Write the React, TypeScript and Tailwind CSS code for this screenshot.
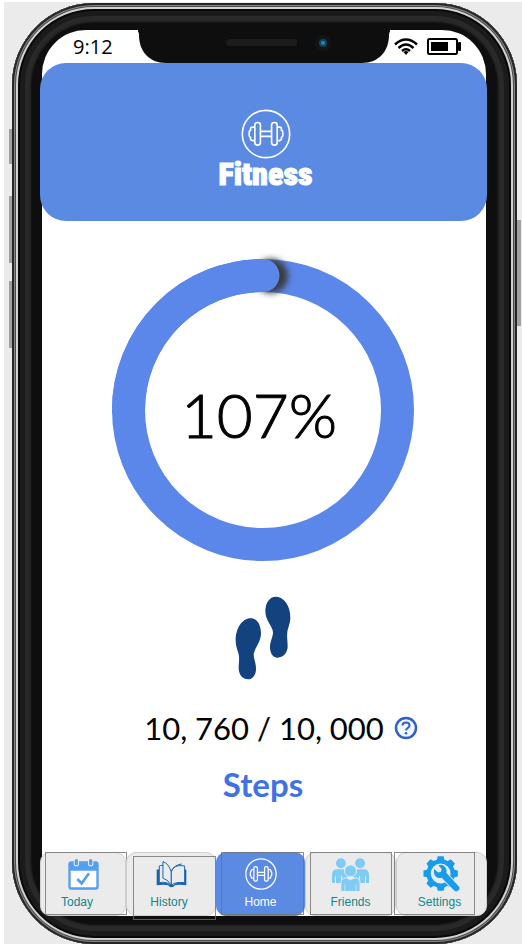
import type { ReactNode } from 'react';

function DumbbellIcon({ className, stroke }: { className: string; stroke: number }) {
  return (
    <svg viewBox="0 0 152 152" fill="none" stroke="#fff" strokeWidth={stroke} strokeLinejoin="round" className={className} aria-hidden="true">
      <circle cx="76" cy="76" r="72" />
      <rect x="42" y="41" width="17" height="69" rx="8" />
      <rect x="93" y="41" width="17" height="69" rx="8" />
      <path d="M42 55h-7q-6 0-6 6v4q-4 1-4 5v11q0 4 4 5v4q0 6 6 6h7" />
      <path d="M110 55h7q6 0 6 6v4q4 1 4 5v11q0 4-4 5v4q0 6-6 6h-7" />
      <path d="M59 68h34M59 83h34" />
    </svg>
  );
}

function TodayIcon() {
  return (
    <svg viewBox="0 0 93 93" className="h-[31px] w-[31px]" aria-hidden="true">
      <rect x="1" y="7" width="91" height="85" rx="9" fill="#529ff3" />
      <rect x="8" y="35" width="77" height="50" rx="2" fill="#fff" />
      <path d="M17 0v14a8 8 0 0 0 16 0V0zM60 0v14a8 8 0 0 0 16 0V0z" fill="#ebebeb" />
      <rect x="20" y="0" width="10" height="19" rx="5" fill="#529ff3" />
      <rect x="63" y="0" width="10" height="19" rx="5" fill="#529ff3" />
      <path d="M28 60l13 13 22-30" fill="none" stroke="#529ff3" strokeWidth="8" />
    </svg>
  );
}

function BookIcon() {
  return (
    <svg viewBox="0 0 92 82" className="h-[27px] w-[31px]" aria-hidden="true">
      <path d="M1 26h8v41q22-4 32 6h10q10-10 32-6V26h8v48q-24-3-35 0-3 6-10 6t-10-6q-11-3-35 0z" fill="#1763ae" />
      <g fill="#ebebeb" stroke="#1763ae" strokeWidth="3" strokeLinejoin="round">
        <path d="M9 15q8-3 14-1l22 18v42Q31 61 9 66z" />
        <path d="M45 32Q53 9 86 15v51Q57 62 45 74z" />
        <path d="M20 2q17 5 25 30v42Q37 57 20 52z" />
        <path d="M45 32Q54 12 77 9" fill="none" />
      </g>
    </svg>
  );
}

function FriendsIcon() {
  return (
    <svg viewBox="0 0 112 100" className="h-[33px] w-[37px]" fill="#7ecbf6" aria-hidden="true">
      <circle cx="27" cy="16" r="15" />
      <circle cx="85" cy="16" r="15" />
      <path d="M0 76V50q0-16 16-16h20q4 14 15 22-14 4-16 20h-5V54h-3v22H12V56H9v20z" />
      <path d="M112 76V50q0-16-16-16H76q-4 14-15 22 14 4 16 20h5V54h3v22h15V56h3v20z" />
      <g stroke="#ebebeb" strokeWidth="3">
        <circle cx="56" cy="39" r="18" />
        <path d="M27 103V77q0-17 16-17l13 6 13-6q16 0 16 17v26z" />
      </g>
      <path d="M39 80v22M73 80v22" stroke="#ebebeb" strokeWidth="2" />
    </svg>
  );
}

const TEETH = [0, 45, 90, 135, 180, 225, 270, 315];

function SettingsIcon() {
  return (
    <svg viewBox="0 0 111 112" className="h-[37px] w-[37px]" fill="#159cec" aria-hidden="true">
      {TEETH.map((a) => (
        <path key={a} d="M41 14L44 1h18l3 13z" transform={`rotate(${a} 53 53)`} />
      ))}
      <circle cx="53" cy="53" r="43" />
      <circle cx="53" cy="53" r="30" fill="#ebebeb" />
      <path
        d="M34 39l11 11 9-2 2-9-10-11q13-4 21 6 6 8 3 17l38 41q5 6-1 12t-12 1L56 66q-10 3-18-4-9-9-4-23z"
        stroke="#ebebeb"
        strokeWidth="5"
        paintOrder="stroke"
      />
    </svg>
  );
}

function Footprints() {
  return (
    <svg viewBox="45 30 168 252" className="h-[84px] w-[56px]" fill="#13437f" aria-hidden="true">
      <path d="M92 97c20 0 31 20 31 45 0 26-19 44-22 63 0 14 7 26 7 43 0 20-11 32-24 32-16 0-28-14-28-34 0-15 3-27 0-41-3-13-9-23-9-42 0-36 20-66 45-66z" />
      <path d="M168 32c25 0 43 29 43 62 0 20-7 30-9 44-2 16 1 28 1 43 0 20-14 34-30 34-14 0-23-13-23-32 0-17 8-28 9-43 0-18-23-36-23-64 0-25 12-44 32-44z" />
    </svg>
  );
}

function ProgressRing({ label }: { label: string }) {
  return (
    <div className="relative grid h-[302px] w-[302px] place-items-center">
      <svg viewBox="0 0 302 302" className="absolute inset-0 overflow-visible" fill="none" aria-hidden="true">
        <defs>
          <filter id="cap-shadow" x="-50%" y="-50%" width="200%" height="200%">
            <feGaussianBlur stdDeviation="3" />
          </filter>
        </defs>
        <circle cx="151" cy="151" r="134.5" stroke="#5a87e9" strokeWidth="33" />
        <circle cx="159" cy="17" r="17" fill="#3a3a3a" filter="url(#cap-shadow)" />
        <path d="M16.5 151A134.500 134.500 0 0 1 151 16.500" stroke="#5a87e9" strokeWidth="33" strokeLinecap="round" />
      </svg>
      <p className="relative pr-2 pt-2 font-[Lato,sans-serif] text-[62px] font-light leading-none text-black [-webkit-text-stroke:1px_#000]">
        {label}
      </p>
    </div>
  );
}

function StatusBar() {
  return (
    <div className="relative flex h-[33px] items-center justify-between pl-[31px] pr-[25px]">
      <svg viewBox="0 0 252 33" className="absolute left-1/2 top-0 h-[33px] w-[252px] -translate-x-1/2" aria-hidden="true">
        <path d="M-4 0Q1 0 1 5C1 21 11 33 28 33H224C241 33 251 21 251 5Q251 0 256 0V-1H-4z" fill="#0e0e0e" />
        <rect x="88" y="9" width="71" height="7" rx="3.500" fill="#1c1c1c" />
        <circle cx="185" cy="13" r="8" fill="#141416" />
        <circle cx="185" cy="13" r="4" fill="#12455c" />
        <circle cx="185" cy="13" r="2" fill="#2a86a0" />
      </svg>
      <time className="font-['Open_Sans',sans-serif] text-[20px] leading-none text-black">9:12</time>
      <div className="flex items-center gap-[9px]">
        <svg viewBox="0 0 24 17" className="h-[17px] w-6" fill="none" stroke="#000" strokeWidth="2.500" aria-label="Wi-Fi">
          <path d="M1 6.500Q12-3.500 23 6.500M4.500 10Q12 3 19.500 10M8 13Q12 9.500 16 13" />
          <path d="M9.500 14L12 17l2.500-3Q12 12 9.500 14z" fill="#000" stroke="none" />
        </svg>
        <svg viewBox="0 0 34 18" className="h-[18px] w-[34px]" aria-label="Battery">
          <rect x="1" y="1" width="29" height="15" rx="1.500" fill="#fff" stroke="#000" strokeWidth="2" />
          <rect x="4" y="4" width="17" height="9" fill="#000" />
          <rect x="31" y="4" width="3" height="9" rx="1" fill="#000" />
        </svg>
      </div>
    </div>
  );
}

type Tab = { label: string; icon: ReactNode; active?: boolean; box: string; labelPad?: string };

const TABS: Tab[] = [
  { label: 'Today', icon: <TodayIcon />, box: 'left-1 -right-[2px] -top-px bottom-0', labelPad: 'pr-3' },
  { label: 'History', icon: <BookIcon />, box: 'left-[6px] -right-px top-[3px] -bottom-[5px]', labelPad: 'pr-1' },
  { label: 'Home', icon: <DumbbellIcon className="h-8 w-8" stroke={6} />, active: true, box: 'left-1 right-0 -top-px bottom-0' },
  { label: 'Friends', icon: <FriendsIcon />, box: 'left-1 right-[3px] -top-px bottom-0' },
  { label: 'Settings', icon: <SettingsIcon />, box: '-left-[3px] right-[11px] -top-px bottom-0', labelPad: 'pr-1' },
];

function TabBar() {
  return (
    <nav className="-ml-[2px] -mr-px grid h-[64px] grid-cols-[86fr_90fr_89fr_91fr_91fr]">
      {TABS.map((t) => (
        <button
          key={t.label}
          type="button"
          className={`relative flex flex-col items-center rounded-[10px] border ${
            t.active ? 'border-[#5b8ae3] bg-[#5b8ae3] text-white' : 'border-[#cfcfcf] bg-[#ebebeb] text-[#0f868e]'
          }`}
        >
          <span className="flex h-[42px] items-center">{t.icon}</span>
          <span className={`text-[12px] leading-[14px] ${t.labelPad ?? ''}`}>{t.label}</span>
          <span className={`pointer-events-none absolute border border-[#707070]/80 ${t.box}`} />
        </button>
      ))}
    </nav>
  );
}

export default function App() {
  return (
    <div className="flex min-h-screen flex-col bg-white pb-[2px] pl-1 pt-[2px] font-['Liberation_Sans',Arial,sans-serif]">
      <div className="flex flex-1 flex-col bg-[#ebebeb] pl-2 pr-[5px] pt-px">
        <div className="relative flex flex-1 flex-col rounded-[82px] bg-[#0e0e0e] pb-[28px] pl-[30px] pr-[31px] pt-[27px] shadow-[inset_0_0_0_2px_#262626,inset_0_0_0_3px_#858585,inset_0_0_0_4px_#4a4a4a,inset_0_0_0_6px_#d2d2d2,inset_0_0_0_8px_#080808,inset_0_0_0_13px_#1b1b1b,inset_0_0_2px_19px_#292929]">
          <span className="absolute -left-[3px] top-[126px] h-[35px] w-[3px] bg-[#a0a0a0]" />
          <span className="absolute -left-[3px] top-[193px] h-[67px] w-[3px] bg-[#a0a0a0]" />
          <span className="absolute -left-[3px] top-[278px] h-[67px] w-[3px] bg-[#a0a0a0]" />
          <span className="absolute -right-[4px] top-[217px] h-[106px] w-[4px] bg-[#a0a0a0]" />

          <div className="flex flex-1 flex-col rounded-b-[10px] rounded-t-[44px] bg-white">
            <StatusBar />
            <header className="-ml-[2px] -mr-px flex h-[158px] flex-col items-center rounded-[26px] bg-[#5b8ae3] pl-1 pt-[46px]">
              <DumbbellIcon className="h-[50px] w-[50px]" stroke={5} />
              <h1 className="font-['Liberation_Sans_Narrow','Roboto_Condensed',Roboto,sans-serif] text-[32px] font-black leading-[30px] text-white [-webkit-text-stroke:1px_#fff]">
                Fitness
              </h1>
            </header>

            <main className="flex flex-1 flex-col items-center pr-[2px] pt-[38px]">
              <ProgressRing label="107%" />
              <div className="pt-[35px]">
                <Footprints />
              </div>
              <div className="flex items-center gap-2.5 pl-9 pt-7 font-[Lato,sans-serif]">
                <p className="text-[31px] font-normal leading-10 text-black">10, 760 / 10, 000</p>
                <button type="button" aria-label="About steps" className="h-6 w-6">
                  <svg viewBox="0 0 24 24" className="h-6 w-6" fill="none" stroke="#2f62c9" aria-hidden="true">
                    <circle cx="12" cy="12" r="10" fill="#f3f7fd" strokeWidth="2.500" />
                    <path d="M8.500 9.500Q8.500 6.500 12 6.500T15.500 9.500C15.500 12 12 12 12 14.500" strokeWidth="2" />
                    <circle cx="12" cy="17.300" r="1.300" fill="#2f62c9" stroke="none" />
                  </svg>
                </button>
              </div>
              <h2 className="pt-4 font-[Lato,sans-serif] text-[33px] font-bold leading-10 text-[#3f72e2]">Steps</h2>
            </main>

            <TabBar />
          </div>
        </div>
      </div>
    </div>
  );
}
